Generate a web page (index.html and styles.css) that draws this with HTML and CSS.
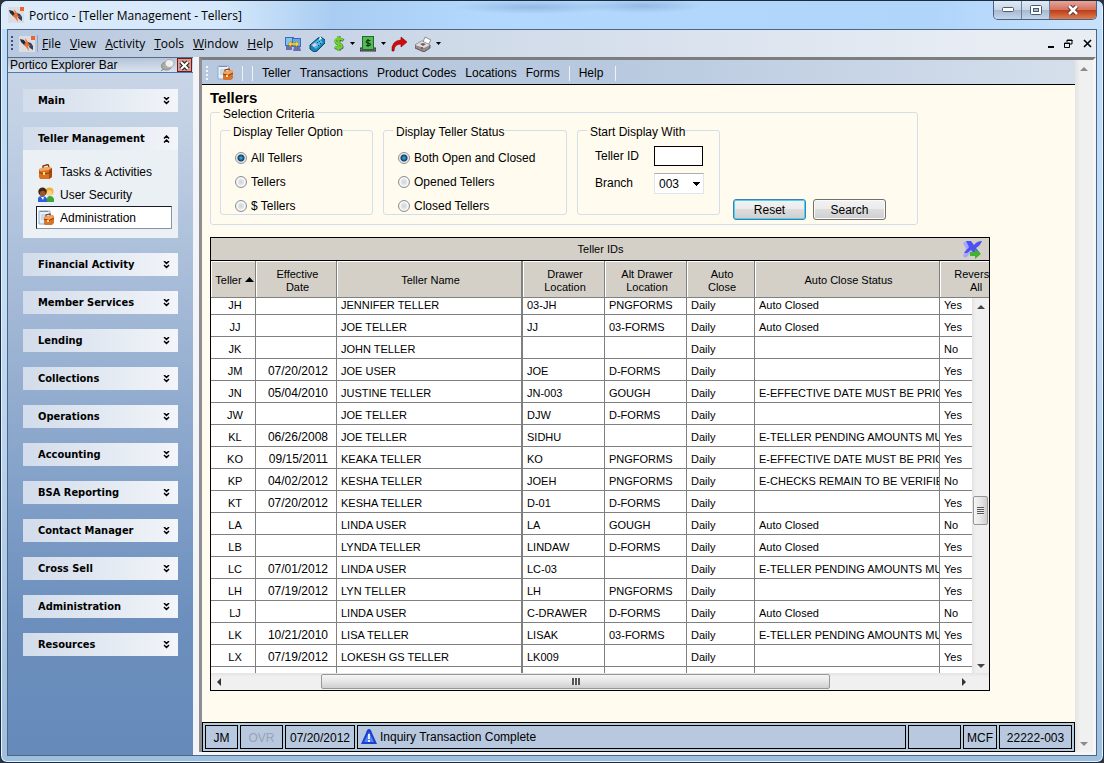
FILE: index.html
```html
<!DOCTYPE html>
<html lang="en">
<head>
    <meta charset="UTF-8">
    <meta name="viewport" content="width=device-width, initial-scale=1.0">
    <title>Portico - [Teller Management - Tellers]</title>
    <link rel="stylesheet" href="styles.css">
</head>
<body>

    <!-- Shared icons -->
    <svg class="icon-defs" aria-hidden="true">
        <symbol id="logo" viewBox="0 0 16 16">
            <rect width="16" height="16" fill="#dcdde2"/>
            <path d="M1 3l4 1 2 3 1 4-3-2-3-3z" fill="#222b3c"/>
            <path d="M9 6l3 1 2 3v4l-3-2-2-3z" fill="#33425e"/>
            <path d="M6 2l3 4 1 3 2 1-3 0 1 5-3-4-2-3 2-1z" fill="#f0702a"/>
            <rect x="12" y="0" width="4" height="4" fill="#ef6325"/>
        </symbol>
        <symbol id="down" viewBox="0 0 7 8">
            <path d="M1 0l2.5 2.5L6 0M1 4l2.5 2.5L6 4" fill="none" stroke="#000" stroke-width="1.5"/>
        </symbol>
        <symbol id="up" viewBox="0 0 7 8">
            <path d="M1 3.5L3.500 1 6 3.500M1 7.500L3.500 5 6 7.500" fill="none" stroke="#000" stroke-width="1.500"/>
        </symbol>
        <symbol id="briefcase" viewBox="0 0 16 16">
            <path d="M5 4V2l5-1.500 1 2.500" fill="none" stroke="#8a3a12" stroke-width="1.400"/>
            <path d="M1 5l9-2 4 1v9l-3 2H2L1 13z" fill="#d9701f"/>
            <path d="M1 5l9-2 4 1-3 2-9 1z" fill="#f6a75a"/>
            <path d="M11 6l3-2v9l-3 2z" fill="#a94a12"/>
            <path d="M1 8l4 2 6-1 3-2" fill="none" stroke="#8a3a12"/>
            <rect x="5" y="8" width="2" height="3" fill="#ffd98a"/>
        </symbol>
        <symbol id="users" viewBox="0 0 16 16">
            <path d="M9 15v-3q0-3 3-3t4 3v3z" fill="#3fa33a"/>
            <circle cx="11.500" cy="4.500" r="4" fill="#f2b134"/>
            <circle cx="11.500" cy="6" r="2.700" fill="#f8d38f"/>
            <path d="M0 15v-3q0-3 4-3t5 3v3z" fill="#2d5fd6"/>
            <circle cx="4.500" cy="4.800" r="4.200" fill="#43240f"/>
            <circle cx="4.800" cy="6.500" r="2.800" fill="#9a5a2c"/>
            <path d="M3 10l2 3 1-3z" fill="#fff"/>
        </symbol>
        <symbol id="admin" viewBox="0 0 16 16">
            <path d="M1 1h11v13H1z" fill="#e8f1fa" stroke="#8fabc9"/>
            <path d="M3 1v1M5 1v1M7 1v1M9 1v1" stroke="#456"/>
            <path d="M3 5h6M3 7h5M3 9h3" stroke="#a9c2dd"/>
            <path d="M8 7V5l4-1 1 2" fill="none" stroke="#8a3a12" stroke-width="1.200"/>
            <path d="M6 7l8-2 2 1v7l-2 2H7l-1-1z" fill="#d8732a"/>
            <path d="M6 7l8-2 2 1v2l-5 2-5-1z" fill="#f2a05a"/>
            <path d="M6 9l5 1.500 5-2.500" fill="none" stroke="#8a3a12"/>
            <rect x="9" y="10" width="2" height="2" fill="#ffe09a"/>
        </symbol>
        <symbol id="caret" viewBox="0 0 5 3">
            <path d="M0 0h5L2.500 3z" fill="#000"/>
        </symbol>
    </svg>

    <div class="window">

        <!-- Title bar -->
        <header class="titlebar">
            <svg class="icon"><use href="#logo"/></svg>
            <span class="title">Portico - [Teller Management - Tellers]</span>
            <div class="window-buttons">
                <button class="win-min" aria-label="Minimize"><svg width="12" height="6" viewBox="0 0 12 6"><rect x=".5" y=".5" width="11" height="4" rx="1" fill="#fff" stroke="#4c5a70"/></svg></button>
                <button class="win-max" aria-label="Maximize"><svg width="12" height="10" viewBox="0 0 12 10"><rect x=".5" y=".5" width="11" height="9" rx="1" fill="#fff" stroke="#4c5a70"/><rect x="3.500" y="3.500" width="5" height="3" fill="#9fbbe0" stroke="#4c5a70"/></svg></button>
                <button class="win-close" aria-label="Close"><svg width="12" height="10" viewBox="0 0 12 10"><path d="M2 1l8 8M10 1L2 9" stroke="#5b2a2a" stroke-width="4.500"/><path d="M2 1l8 8M10 1L2 9" stroke="#fff" stroke-width="2.500"/></svg></button>
            </div>
        </header>

        <div class="frame">

            <!-- Menu bar -->
            <nav class="menubar">
                <span class="grip"></span>
                <svg class="icon menu-logo"><use href="#logo"/></svg>
                <div class="menus">
                    <button><u>F</u>ile</button>
                    <button><u>V</u>iew</button>
                    <button><u>A</u>ctivity</button>
                    <button><u>T</u>ools</button>
                    <button><u>W</u>indow</button>
                    <button><u>H</u>elp</button>
                </div>
                <div class="tools">
                    <button aria-label="Connect"><svg class="icon" viewBox="0 0 16 16">
                        <rect x=".5" y="1.500" width="8" height="8" fill="#7cc4f4" stroke="#4466bb"/>
                        <rect x="7.500" y="2.500" width="8" height="8" fill="#5fa8ec" stroke="#4466bb"/>
                        <path d="M1 10h6v4H1zM9 11h6l1 4H8z" fill="#6a6fb0"/>
                        <path d="M3 8l3-3v2h5V5l3 3-3 3V9H6v2z" fill="#ffd51e" stroke="#a88400" stroke-width=".5"/>
                    </svg></button>
                    <button aria-label="Phone"><svg class="icon" viewBox="0 0 16 16">
                        <path d="M1 9l8-7 3-1 4 3v3l-8 8-3 1-4-3z" fill="#1784b8" stroke="#0a4467"/>
                        <path d="M2 9l8-6 4 3-7 7z" fill="#4db9e2"/>
                        <path d="M11 0l2 3-3 1" fill="#fff"/>
                        <path d="M3 9l3-2 2 2-3 2z" fill="#f7c4e4"/>
                        <path d="M8 6l1 1M10 5l1 1M9 9l1 1M11 7l1 1" stroke="#084a70"/>
                    </svg></button>
                    <button class="drop" aria-label="Cash"><svg class="icon-money" viewBox="0 0 12 16">
                        <path d="M10.500 4.500Q8 2.500 5 3.500T3.500 7Q5 8 7 8.500t2 3Q7 13.500 2 11.500M6 0v15" fill="none" stroke="#555" stroke-width="3"/>
                        <path d="M10 4Q7 2 4 3T3 6.500Q5 7.500 7 8t1.500 3Q6 13 1.500 11M5.500 0v15" fill="none" stroke="#6ed32b" stroke-width="2.300"/>
                    </svg><svg class="caret"><use href="#caret"/></svg></button>
                    <button class="drop" aria-label="Teller cash"><svg class="icon" viewBox="0 0 16 16">
                        <path d="M0 12h16v3H0z" fill="#777" stroke="#333"/>
                        <rect x="2.500" y=".5" width="11" height="13" fill="#55b955" stroke="#226b2a"/>
                        <path d="M10.500 4.500H7Q5 7 8 7t2 2.500H6M8 3v8" fill="none" stroke="#0a3a10" stroke-width="1.200"/>
                    </svg><svg class="caret"><use href="#caret"/></svg></button>
                    <button aria-label="Forward"><svg class="icon" viewBox="0 0 16 16">
                        <path d="M1 15Q0 5 10 4V1l6 5-6 5V8Q3 8 3 15z" fill="#d90808" stroke="#7a0000" stroke-width=".6"/>
                    </svg></button>
                    <button class="drop" aria-label="Print"><svg class="icon" viewBox="0 0 16 16">
                        <path d="M8 6l2-5 6 3-3 5z" fill="#fff" stroke="#777" stroke-width=".8"/>
                        <path d="M0 9l7-4 8 4v3l-6 4-9-4z" fill="#8e8e8e" stroke="#444" stroke-width=".8"/>
                        <path d="M0 9l7-4 8 4-6 3z" fill="#dedede"/>
                        <path d="M5 8l3-1 3 1-3 2z" fill="#666"/>
                        <path d="M6 12h2" stroke="#e02020" stroke-width="1.500"/>
                    </svg><svg class="caret"><use href="#caret"/></svg></button>
                </div>
                <div class="child-buttons">
                    <button aria-label="Minimize child"><svg width="6" height="9"><path d="M0 8h6" stroke="#000" stroke-width="2"/></svg></button>
                    <button aria-label="Restore child"><svg width="9" height="9"><path d="M3 3V1h5v4H6M.5 4h5v4.500h-5zM3 1.500h5.500M0 4.500h6" fill="none" stroke="#000"/></svg></button>
                    <button aria-label="Close child"><svg width="9" height="9"><path d="M1 1l7 7M8 1L1 8" stroke="#000" stroke-width="1.600"/></svg></button>
                </div>
            </nav>

            <div class="workspace">

                <!-- Explorer bar -->
                <aside class="explorer">
                    <div class="explorer-header">
                        <span>Portico Explorer Bar</span>
                        <svg class="pin" viewBox="0 0 15 13">
                            <path d="M1 12l5-4" stroke="#777"/>
                            <ellipse cx="6.500" cy="7" rx="5" ry="4" fill="#aaa" stroke="#888"/>
                            <ellipse cx="9.500" cy="4.500" rx="4.500" ry="4" fill="#eee" stroke="#aaa"/>
                        </svg>
                        <button class="close-bar" aria-label="Close explorer bar"><svg width="11" height="11" viewBox="0 0 11 11"><path d="M2 2l7 7M9 2L2 9" stroke="#222" stroke-width="4.500"/><path d="M2 2l7 7M9 2L2 9" stroke="#fff" stroke-width="2.200"/></svg></button>
                    </div>
                    <div class="groups">
                        <button class="group">Main<svg><use href="#down"/></svg></button>
                        <section>
                            <button class="group">Teller Management<svg><use href="#up"/></svg></button>
                            <div class="links">
                                <a href="#tasks"><svg class="icon"><use href="#briefcase"/></svg>Tasks &amp; Activities</a>
                                <a href="#security"><svg class="icon"><use href="#users"/></svg>User Security</a>
                                <a href="#administration" class="selected"><svg class="icon"><use href="#admin"/></svg>Administration</a>
                            </div>
                        </section>
                        <button class="group">Financial Activity<svg><use href="#down"/></svg></button>
                        <button class="group">Member Services<svg><use href="#down"/></svg></button>
                        <button class="group">Lending<svg><use href="#down"/></svg></button>
                        <button class="group">Collections<svg><use href="#down"/></svg></button>
                        <button class="group">Operations<svg><use href="#down"/></svg></button>
                        <button class="group">Accounting<svg><use href="#down"/></svg></button>
                        <button class="group">BSA Reporting<svg><use href="#down"/></svg></button>
                        <button class="group">Contact Manager<svg><use href="#down"/></svg></button>
                        <button class="group">Cross Sell<svg><use href="#down"/></svg></button>
                        <button class="group">Administration<svg><use href="#down"/></svg></button>
                        <button class="group">Resources<svg><use href="#down"/></svg></button>
                    </div>
                </aside>

                <!-- Tellers window -->
                <main class="child">
                    <div class="page">
                        <nav class="toolbar">
                            <span class="grip light"></span>
                            <svg class="icon"><use href="#admin"/></svg>
                            <span class="sep"></span>
                            <span class="sep"></span>
                            <button>Teller</button>
                            <button>Transactions</button>
                            <button>Product Codes</button>
                            <button>Locations</button>
                            <button>Forms</button>
                            <span class="sep"></span>
                            <button>Help</button>
                            <span class="toolbar-end"></span>
                        </nav>

                        <div class="content">
                            <h1>Tellers</h1>

                            <form>
                                <fieldset class="criteria">
                                    <legend>Selection Criteria</legend>
                                    <div class="criteria-row">
                                        <fieldset class="option-box">
                                            <legend>Display Teller Option</legend>
                                            <label><input type="radio" name="option" checked>All Tellers</label>
                                            <label><input type="radio" name="option">Tellers</label>
                                            <label><input type="radio" name="option">$ Tellers</label>
                                        </fieldset>
                                        <fieldset class="status-box">
                                            <legend>Display Teller Status</legend>
                                            <label><input type="radio" name="status" checked>Both Open and Closed</label>
                                            <label><input type="radio" name="status">Opened Tellers</label>
                                            <label><input type="radio" name="status">Closed Tellers</label>
                                        </fieldset>
                                        <fieldset class="start-box">
                                            <legend>Start Display With</legend>
                                            <div class="start-fields">
                                                <label for="tellerId">Teller ID</label>
                                                <input type="text" id="tellerId">
                                                <label for="branch">Branch</label>
                                                <select id="branch"><option>003</option></select>
                                            </div>
                                        </fieldset>
                                        <div class="form-buttons">
                                            <button type="reset" class="btn default">Reset</button>
                                            <button type="button" class="btn">Search</button>
                                        </div>
                                    </div>
                                </fieldset>
                            </form>

                            <div class="grid">
                                <div class="grid-title">
                                    <span id="gridTitle">Teller IDs</span>
                                    <button aria-label="Export"><svg width="20" height="19" viewBox="0 0 20 19">
                                        <path d="M1 3q3-3 6 0l4 5-5 8q-3 3-5 0l3-7z" fill="#a9a6ff"/>
                                        <path d="M4 1h5l3 4q3-4 8-4-2 5-6 7l4 5-6 1-3-4-4 3-3 0 5-6z" fill="#4b52f2"/>
                                        <path d="M8 12h5V9l6 5-6 5v-3H8z" fill="#43b32b"/>
                                    </svg></button>
                                </div>
                                <div class="grid-view">
                                    <table aria-labelledby="gridTitle">
                                        <colgroup>
                                            <col class="c-teller"><col class="c-date"><col class="c-name"><col class="c-drawer"><col class="c-drawer"><col class="c-close"><col class="c-status"><col class="c-reversal">
                                        </colgroup>
                                        <thead>
                                            <tr><th>Teller <svg class="sort" viewBox="0 0 9 5"><path d="M0 5h9L4.500 0z"/></svg></th><th>Effective<br>Date</th><th>Teller Name</th><th>Drawer<br>Location</th><th>Alt Drawer<br>Location</th><th>Auto<br>Close</th><th>Auto Close Status</th><th>Reversal<br>All</th></tr>
                                        </thead>
                                        <tbody>
                                            <tr><td>JH</td><td></td><td>JENNIFER TELLER</td><td>03-JH</td><td>PNGFORMS</td><td>Daily</td><td>Auto Closed</td><td>Yes</td></tr>
                                            <tr><td>JJ</td><td></td><td>JOE TELLER</td><td>JJ</td><td>03-FORMS</td><td>Daily</td><td>Auto Closed</td><td>Yes</td></tr>
                                            <tr><td>JK</td><td></td><td>JOHN TELLER</td><td></td><td></td><td>Daily</td><td></td><td>No</td></tr>
                                            <tr><td>JM</td><td>07/20/2012</td><td>JOE USER</td><td>JOE</td><td>D-FORMS</td><td>Daily</td><td></td><td>Yes</td></tr>
                                            <tr><td>JN</td><td>05/04/2010</td><td>JUSTINE TELLER</td><td>JN-003</td><td>GOUGH</td><td>Daily</td><td>E-EFFECTIVE DATE MUST BE PRIO</td><td>Yes</td></tr>
                                            <tr><td>JW</td><td></td><td>JOE TELLER</td><td>DJW</td><td>D-FORMS</td><td>Daily</td><td></td><td>Yes</td></tr>
                                            <tr><td>KL</td><td>06/26/2008</td><td>JOE TELLER</td><td>SIDHU</td><td></td><td>Daily</td><td>E-TELLER PENDING AMOUNTS MU</td><td>Yes</td></tr>
                                            <tr><td>KO</td><td>09/15/2011</td><td>KEAKA TELLER</td><td>KO</td><td>PNGFORMS</td><td>Daily</td><td>E-EFFECTIVE DATE MUST BE PRIO</td><td>Yes</td></tr>
                                            <tr><td>KP</td><td>04/02/2012</td><td>KESHA TELLER</td><td>JOEH</td><td>PNGFORMS</td><td>Daily</td><td>E-CHECKS REMAIN TO BE VERIFIED</td><td>No</td></tr>
                                            <tr><td>KT</td><td>07/20/2012</td><td>KESHA TELLER</td><td>D-01</td><td>D-FORMS</td><td>Daily</td><td></td><td>Yes</td></tr>
                                            <tr><td>LA</td><td></td><td>LINDA USER</td><td>LA</td><td>GOUGH</td><td>Daily</td><td>Auto Closed</td><td>No</td></tr>
                                            <tr><td>LB</td><td></td><td>LYNDA TELLER</td><td>LINDAW</td><td>D-FORMS</td><td>Daily</td><td>Auto Closed</td><td>Yes</td></tr>
                                            <tr><td>LC</td><td>07/01/2012</td><td>LINDA USER</td><td>LC-03</td><td></td><td>Daily</td><td>E-TELLER PENDING AMOUNTS MU</td><td>Yes</td></tr>
                                            <tr><td>LH</td><td>07/19/2012</td><td>LYN TELLER</td><td>LH</td><td>PNGFORMS</td><td>Daily</td><td></td><td>Yes</td></tr>
                                            <tr><td>LJ</td><td></td><td>LINDA USER</td><td>C-DRAWER</td><td>D-FORMS</td><td>Daily</td><td>Auto Closed</td><td>No</td></tr>
                                            <tr><td>LK</td><td>10/21/2010</td><td>LISA TELLER</td><td>LISAK</td><td>03-FORMS</td><td>Daily</td><td>E-TELLER PENDING AMOUNTS MU</td><td>Yes</td></tr>
                                            <tr><td>LX</td><td>07/19/2012</td><td>LOKESH GS TELLER</td><td>LK009</td><td></td><td>Daily</td><td></td><td>Yes</td></tr>
                                            <tr class="partial"><td></td><td></td><td></td><td></td><td></td><td></td><td></td><td></td></tr>
                                        </tbody>
                                    </table>
                                    <div class="vscroll">
                                        <i class="arrow-up"></i>
                                        <span class="vthumb"><i></i></span>
                                        <i class="arrow-down"></i>
                                    </div>
                                </div>
                                <div class="hscroll">
                                    <i class="arrow-left"></i>
                                    <span class="hthumb"><i></i></span>
                                    <i class="arrow-right"></i>
                                </div>
                            </div>
                        </div>

                        <!-- Status bar -->
                        <footer class="statusbar">
                            <span class="cell user">JM</span>
                            <span class="cell ovr">OVR</span>
                            <span class="cell date">07/20/2012</span>
                            <span class="cell message"><svg class="icon" viewBox="0 0 16 16"><path d="M8 0q2 0 3 4l5 11H0L5 4q1-4 3-4z" fill="#1c3fd0"/><path d="M8 3l5 10H3z" fill="#5584ee"/><path d="M8 5v5M8 11v2" stroke="#e4edff" stroke-width="2"/></svg>Inquiry Transaction Complete</span>
                            <span class="cell blank"></span>
                            <span class="cell mcf">MCF</span>
                            <span class="cell branch-no">22222-003</span>
                        </footer>
                    </div>
                    <div class="page-scroll">
                        <i class="arrow-up"></i>
                        <i class="arrow-down"></i>
                    </div>
                </main>
            </div>
        </div>
    </div>

</body>
</html>
```
FILE: styles.css
```css
* {
    box-sizing: border-box;
}

body {
    margin: 0;
    height: 100vh;
    background-color: #2c3440;
    font-family: "Liberation Sans", Arial, sans-serif;
    font-size: 12px;
    color: #000;
}

button {
    padding: 0;
    border: none;
    background: none;
    font: inherit;
    color: inherit;
}

svg {
    display: block;
    flex: none;
}

.icon-defs {
    position: absolute;
    width: 0;
    height: 0;
}

.icon {
    width: 16px;
    height: 16px;
}

/* Window */
.window {
    display: flex;
    flex-direction: column;
    height: 100%;
    min-height: 763px;
    padding: 0 6px 6px;
    border: 1px solid #1d2b3c;
    border-radius: 7px;
    background: linear-gradient(180deg, #b6d8fb 0, #bcdcfb 30px, #c3dcf5 40%, #9dbfe0 100%);
    box-shadow: inset 0 0 0 1px #e4f2ff;
}

.titlebar {
    display: flex;
    align-items: center;
    height: 28px;
    margin: 0 -5px;
    padding-left: 6px;
    border-radius: 6px 6px 0 0;
    background:
        radial-gradient(ellipse 80px 7px at 530px 6px, rgba(60, 100, 150, 0.25), transparent),
        radial-gradient(ellipse 60px 7px at 640px 5px, rgba(60, 100, 150, 0.25), transparent),
        linear-gradient(90deg, #dcebfa 0, #d5e8fb 220px, #a9cdf2 330px, #b3d8fd 480px, #b0d5fb 85%, #c8e2fc 100%);
}

.title {
    padding-left: 5px;
    font-family: "Open Sans", "Noto Sans", sans-serif;
    font-size: 12px;
}

.window-buttons {
    display: flex;
    align-self: flex-start;
    margin-left: auto;
    margin-right: 5px;
    border: 1px solid #4c6080;
    border-top: none;
    border-radius: 0 0 5px 5px;
    overflow: hidden;
}

.window-buttons button {
    display: flex;
    align-items: center;
    justify-content: center;
    width: 28px;
    height: 18px;
    border-right: 1px solid #6b7f9c;
    background: linear-gradient(#dfeaf6 0, #c8d6e7 48%, #a5b8d0 50%, #c3d6ea 100%);
}

.window-buttons .win-close {
    width: 46px;
    border: none;
    background: linear-gradient(#e6a598 0, #d5725f 48%, #bb3a18 50%, #dd8050 100%);
}

.frame {
    flex: 1;
    display: flex;
    flex-direction: column;
    border: 1px solid #50657f;
    background-color: #f2f4f8;
}

/* Menu bar */
.menubar {
    display: flex;
    align-items: center;
    height: 27px;
    padding: 0 4px 0 3px;
    background: linear-gradient(90deg, #b9c9df, #e8edf4 90%);
    font-family: "Open Sans", "Noto Sans", sans-serif;
}

.grip {
    width: 2px;
    height: 15px;
    background: repeating-linear-gradient(#3c4f8c 0, #3c4f8c 2px, transparent 2px, transparent 4px);
}

.grip.light {
    background: repeating-linear-gradient(#f4f6fa 0, #f4f6fa 2px, transparent 2px, transparent 4px);
}

.menu-logo {
    margin-left: 6px;
}

.menus {
    display: flex;
    gap: 9px;
    margin-left: 2px;
    padding-left: 4px;
    border-left: 1px solid #8fa6c8;
}

.tools {
    display: flex;
    align-items: center;
    gap: 8px;
    margin-left: 12px;
}

.drop {
    display: flex;
    align-items: center;
    gap: 5px;
    margin-right: -3px;
}

.icon-money {
    width: 12px;
    height: 16px;
}

.caret {
    width: 5px;
    height: 3px;
}

.child-buttons {
    display: flex;
    gap: 10px;
    margin-left: auto;
}

.workspace {
    flex: 1;
    display: flex;
    gap: 6px;
}

/* Explorer bar */
.explorer {
    width: 185px;
    background: linear-gradient(#c8d5e7 0, #c4d2e5 60px, #6c8fbe 560px, #668ab9 100%);
}

.explorer-header {
    display: flex;
    align-items: center;
    height: 16px;
    padding-left: 2px;
    border-top: 1px solid #5a6b84;
    border-bottom: 1px solid #4c7ab5;
    background: linear-gradient(#b4c4da, #dbe3ee);
}

.pin {
    width: 15px;
    height: 13px;
    margin-left: auto;
}

.close-bar {
    display: flex;
    align-items: center;
    justify-content: center;
    width: 15px;
    height: 14px;
    margin: 0 1px 0 2px;
    border: 1px solid #701c14;
    background-color: #d89a90;
}

.groups {
    display: flex;
    flex-direction: column;
    gap: 15px;
    padding: 16px 15px;
}

.group {
    display: flex;
    align-items: center;
    justify-content: space-between;
    width: 100%;
    height: 23px;
    padding: 0 8px 0 15px;
    background: linear-gradient(90deg, #d2dcea, #f2f5f9);
    font-family: "DejaVu Sans Condensed", "Noto Sans", sans-serif;
    font-size: 11px;
    font-weight: bold;
}

.group svg {
    width: 7px;
    height: 8px;
}

.links {
    padding: 10px 6px 9px 13px;
    background-color: #ebf0f5;
}

.links a {
    display: flex;
    align-items: center;
    gap: 6px;
    height: 23px;
    padding-left: 1px;
    border: 1px solid transparent;
    color: #000;
    text-decoration: none;
}

.links .selected {
    border-color: #1a1a2a #8a94a8 #8a94a8 #1a1a2a;
    background-color: #fff;
}

/* Child window */
.child {
    flex: 1;
    display: flex;
    min-width: 0;
    margin-bottom: 3px;
    border: 3px solid #7d7d7d;
    border-left-color: #8d8d92;
    border-right-color: #f4f6fa;
    border-bottom: none;
}

.page {
    flex: 1;
    display: flex;
    flex-direction: column;
    min-width: 0;
    background-color: #fffbef;
}

.toolbar {
    display: flex;
    align-items: center;
    gap: 9px;
    height: 25px;
    padding: 2px 0 0 4px;
    border-bottom: 1px solid #000;
    background: linear-gradient(90deg, #b8c9df 410px, #d5dfec);
}

.sep {
    width: 1px;
    height: 15px;
    background-color: #eef2f8;
}

.toolbar-end {
    width: 1px;
    height: 15px;
    margin-left: 3px;
    background-color: #eef2f8;
}

.content {
    flex: 1;
    padding: 5px 8px 0;
}

h1 {
    margin: 0;
    font-size: 15px;
    line-height: 16px;
}

/* Selection criteria */
fieldset {
    min-width: 0;
    margin: 0;
    padding: 0 9px;
    border: 1px solid #d3deea;
    border-radius: 3px;
}

legend {
    height: 12px;
    padding: 0 0 0 3px;
    line-height: 16px;
}

.criteria {
    max-width: 708px;
}

.criteria-row {
    display: flex;
    align-items: flex-start;
    gap: 10px;
    height: 106px;
    padding: 6px 0 4px;
}

.criteria-row fieldset {
    height: 91px;
}

.option-box {
    width: 153px;
}

.status-box {
    width: 184px;
}

.start-box {
    width: 143px;
}

.criteria-row fieldset > label {
    display: flex;
    align-items: center;
    gap: 4px;
    height: 16px;
    margin-top: 8px;
    padding-left: 5px;
}

.criteria-row legend + label {
    margin-top: 14px;
}

input[type="radio"] {
    appearance: none;
    width: 12px;
    height: 12px;
    margin: 0;
    border: 1px solid #8e8f8f;
    border-radius: 50%;
    background: radial-gradient(circle, #d0d4d8 0, #e4e7ea 3px, #fff 4px, #e8e8e8 5px);
}

input[type="radio"]:checked {
    background: radial-gradient(circle at 50% 50%, #4db4e8 0, #0c3f66 3px, #dfe4e8 4px, #f4f4f4 5px);
}

.start-fields {
    display: grid;
    grid-template-columns: 59px 50px;
    row-gap: 7px;
    padding: 10px 0 0 8px;
}

.start-fields label {
    line-height: 20px;
}

.start-fields input {
    width: 49px;
    height: 20px;
    border: 1px solid #000;
    background-color: #fff;
    font: inherit;
}

.start-fields select {
    appearance: none;
    width: 50px;
    height: 21px;
    padding: 0 4px;
    border: 1px solid #dfe4ee;
    border-top-color: #abadb3;
    border-radius: 0;
    background:
        linear-gradient(#000, #000) 38px 8px / 7px 1px no-repeat,
        linear-gradient(#000, #000) 39px 9px / 5px 1px no-repeat,
        linear-gradient(#000, #000) 40px 10px / 3px 1px no-repeat,
        linear-gradient(#000, #000) 41px 11px / 1px 1px no-repeat,
        #fff;
    font: inherit;
    color: #000;
}

.form-buttons {
    display: flex;
    align-self: flex-end;
    gap: 7px;
    margin-left: 3px;
}

.btn {
    width: 73px;
    height: 21px;
    border: 1px solid #707070;
    border-radius: 3px;
    background: linear-gradient(#f2f2f2 0, #ebebeb 49%, #dddddd 50%, #cfcfcf 100%);
    box-shadow: inset 0 0 0 1px #fafafa;
}

.btn.default {
    border-color: #3c7fb1;
    box-shadow: inset 0 0 0 1px #4fd0f5;
}

/* Teller grid */
.grid {
    max-width: 780px;
    margin-top: 12px;
    border: 1px solid #000;
    background-color: #fff;
    font-size: 11px;
}

.grid-title {
    display: flex;
    align-items: center;
    height: 23px;
    border-bottom: 1px solid #000;
    background-color: #d4d0c8;
}

.grid-title span {
    flex: 1;
    padding-left: 28px;
    text-align: center;
}

.grid-title button {
    margin-right: 7px;
}

.grid-view {
    position: relative;
    overflow: hidden;
}

table {
    table-layout: fixed;
    width: 799px;
    border-collapse: separate;
    border-spacing: 0;
}

.c-teller { width: 45px; }
.c-date { width: 81px; }
.c-name { width: 186px; }
.c-drawer { width: 82px; }
.c-close { width: 68px; }
.c-status { width: 185px; }
.c-reversal { width: 70px; }

th {
    height: 37px;
    padding: 3px 0 0 3px;
    border-right: 1px solid #808080;
    border-bottom: 1px solid #808080;
    background-color: #d4d0c8;
    box-shadow: inset 1px 1px 0 #fff;
    font-weight: normal;
    line-height: 13px;
}

td {
    height: 22px;
    padding: 3px 0 0 4px;
    border-right: 1px solid #808080;
    border-bottom: 1px solid #808080;
    line-height: 13px;
    white-space: nowrap;
    overflow: hidden;
}

td:nth-child(1) {
    text-align: center;
}

td:nth-child(2) {
    padding-right: 8px;
    font-size: 12px;
    text-align: right;
}

th:nth-child(3),
td:nth-child(3) {
    border-right-width: 2px;
}

tbody tr:first-child td {
    height: 17px;
    padding-top: 0;
    padding-bottom: 2px;
}

.partial td {
    height: 6px;
    border-bottom: none;
}

.sort {
    display: inline-block;
    width: 9px;
    height: 5px;
    vertical-align: 2px;
}

/* Scroll bars */
.vscroll {
    position: absolute;
    top: 37px;
    right: 0;
    bottom: 0;
    display: flex;
    flex-direction: column;
    align-items: center;
    width: 17px;
    padding: 7px 0 5px;
    background: linear-gradient(90deg, #e3e3e3, #f0f0f0 4px);
}

.vthumb,
.hthumb {
    display: flex;
    align-items: center;
    justify-content: center;
    border: 1px solid #979797;
    border-radius: 2px;
}

.vthumb {
    width: 15px;
    height: 29px;
    margin: auto 0 139px;
    background: linear-gradient(90deg, #f5f5f5 0, #e6e6e6 50%, #cfcfcf 100%);
}

.vthumb i {
    width: 7px;
    height: 8px;
    background: repeating-linear-gradient(#555 0, #555 1px, #eee 1px, #eee 2px);
}

.hscroll {
    display: flex;
    align-items: center;
    height: 17px;
    padding: 0 23px 0 6px;
    background: linear-gradient(#e3e3e3, #f0f0f0 4px);
}

.hthumb {
    width: 509px;
    height: 15px;
    margin: 0 auto 0 100px;
    background: linear-gradient(#f5f5f5 0, #e6e6e6 50%, #cfcfcf 100%);
}

.hthumb i {
    width: 8px;
    height: 7px;
    background: repeating-linear-gradient(90deg, #555 0, #555 2px, #eee 2px, #eee 3px);
}

.arrow-up,
.arrow-down {
    width: 0;
    border: 4px solid transparent;
}

.arrow-up {
    border-top: none;
    border-bottom-color: #444;
}

.arrow-down {
    border-bottom: none;
    border-top-color: #444;
}

.arrow-left,
.arrow-right {
    height: 0;
    border: 4px solid transparent;
}

.arrow-left {
    border-left: none;
    border-right-color: #333;
}

.arrow-right {
    border-right: none;
    border-left-color: #333;
}

.page-scroll {
    display: flex;
    flex-direction: column;
    align-items: center;
    justify-content: space-between;
    width: 18px;
    padding: 7px 0 6px;
    background: linear-gradient(90deg, #e3e3e3, #f0f0f0 5px);
}

.page-scroll .arrow-up {
    border-bottom-color: #8a8a8a;
}

.page-scroll .arrow-down {
    border-top-color: #8a8a8a;
}

/* Status bar */
.statusbar {
    display: flex;
    gap: 2px;
    height: 30px;
    padding: 2px;
    border: 1px solid #000;
    background-color: #b4cbdc;
}

.cell {
    display: flex;
    align-items: center;
    justify-content: center;
    padding-top: 2px;
    border: 1px solid #000;
    background-color: #b8c8df;
}

.user {
    width: 33px;
}

.mcf {
    width: 34px;
}

.ovr {
    width: 43px;
    color: #9aa3b3;
}

.date {
    width: 70px;
}

.message {
    flex: 1;
    justify-content: flex-start;
    gap: 3px;
    padding: 0 0 0 3px;
}

.blank {
    width: 53px;
}

.branch-no {
    width: 73px;
}
```
